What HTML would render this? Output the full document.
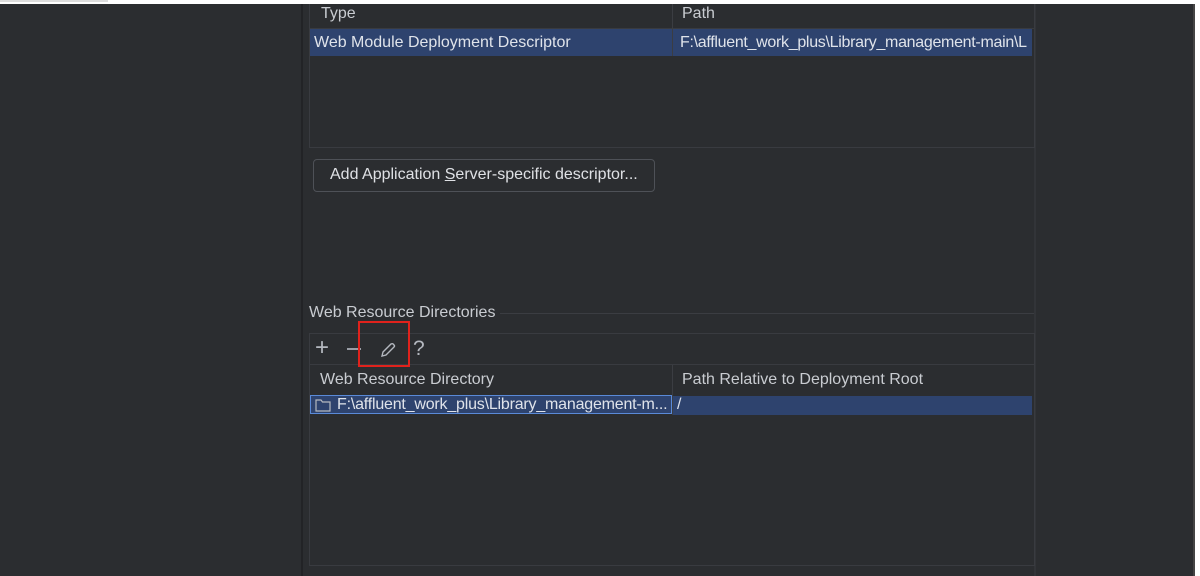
<!DOCTYPE html>
<html><head><style>
body{margin:0;width:1200px;height:576px;background:#2b2d30;position:relative;overflow:hidden;font-family:"Liberation Sans",sans-serif;color:#c9ccd1;font-size:16px}
.a{position:absolute}
</style></head><body>
<div class="a" style="left:0;top:0;width:1200px;height:4px;background:#fff"></div>
<div class="a" style="left:0;top:0;width:108px;height:2px;background:#ddd"></div>
<div class="a" style="left:1195px;top:0;width:5px;height:576px;background:#fff"></div>
<div class="a" style="left:1193px;top:4px;width:2px;height:572px;background:#444"></div>
<div class="a" style="left:301px;top:4px;width:2px;height:572px;background:#222326"></div>
<div class="a" style="left:1034px;top:4px;width:2px;height:572px;background:#323438"></div>
<!-- table 1 -->
<div class="a" style="left:309px;top:4px;width:724px;height:143px;border:1px solid #393b40;border-top:none;background:#2b2d30"></div>
<div class="a" style="left:310px;top:4px;width:724px;height:24px;border-bottom:1px solid #393b40"></div>
<div class="a" style="left:672px;top:4px;width:1px;height:52px;background:#3b3d42"></div>
<div class="a" style="left:321px;top:5px">Type</div>
<div class="a" style="left:682px;top:5px">Path</div>
<div class="a" style="left:310px;top:29px;width:362px;height:27px;background:#2e436e"></div>
<div class="a" style="left:673px;top:29px;width:359px;height:27px;background:#2e436e"></div>
<div class="a" style="left:314px;top:34px;color:#dfe3ea">Web Module Deployment Descriptor</div>
<div class="a" style="left:680px;top:34px;color:#dfe3ea;width:352px;overflow:hidden;white-space:nowrap;letter-spacing:-0.3px">F:\affluent_work_plus\Library_management-main\L</div>
<!-- button -->
<div class="a" style="left:313px;top:159px;width:340px;height:31px;border:1px solid #4e5157;border-radius:4px;background:#2b2d30"></div>
<div class="a" style="left:330px;top:166px;color:#dfe1e5">Add Application <u>S</u>erver-specific descriptor...</div>
<!-- section -->
<div class="a" style="left:309px;top:304px">Web Resource Directories</div>
<div class="a" style="left:500px;top:313px;width:534px;height:1px;background:#3b3d42"></div>
<div class="a" style="left:309px;top:333px;width:724px;height:231px;border:1px solid #393b40"></div>
<div class="a" style="left:310px;top:364px;width:724px;height:1px;background:#393b40"></div>
<div class="a" style="left:315px;top:334px;font-size:24px;color:#b4b8bf">+</div>
<div class="a" style="left:347px;top:348px;width:14px;height:1.5px;background:#9a9ea6"></div>
<svg class="a" style="left:378px;top:340px" width="20" height="20" viewBox="0 0 20 20"><path d="M4 16 L5 12 L13 4 Q15 3 16 5 Q17 6 16 7 L8 15 Z" fill="none" stroke="#b4b8bf" stroke-width="1.4"/></svg>
<div class="a" style="left:413px;top:337px;font-size:21px;color:#b4b8bf">?</div>
<div class="a" style="left:358px;top:321px;width:48px;height:42px;border:2.5px solid #e0221c"></div>
<div class="a" style="left:672px;top:365px;width:1px;height:50px;background:#3b3d42"></div>
<div class="a" style="left:320px;top:371px">Web Resource Directory</div>
<div class="a" style="left:682px;top:371px">Path Relative to Deployment Root</div>
<div class="a" style="left:310px;top:395px;width:360px;height:17px;border:1px solid #5a8ad8;background:#2e436e"></div>
<div class="a" style="left:673px;top:396px;width:359px;height:19px;background:#2e436e"></div>
<svg class="a" style="left:315px;top:398px" width="16" height="14"><path d="M1 2 H6 L7.5 4 H15 V13 H1 Z" fill="none" stroke="#b4b8bf" stroke-width="1.2"/></svg>
<div class="a" style="left:337px;top:396px;color:#dfe3ea;letter-spacing:-0.2px">F:\affluent_work_plus\Library_management-m...</div>
<div class="a" style="left:677px;top:396px;color:#dfe3ea">/</div>
</body></html>
